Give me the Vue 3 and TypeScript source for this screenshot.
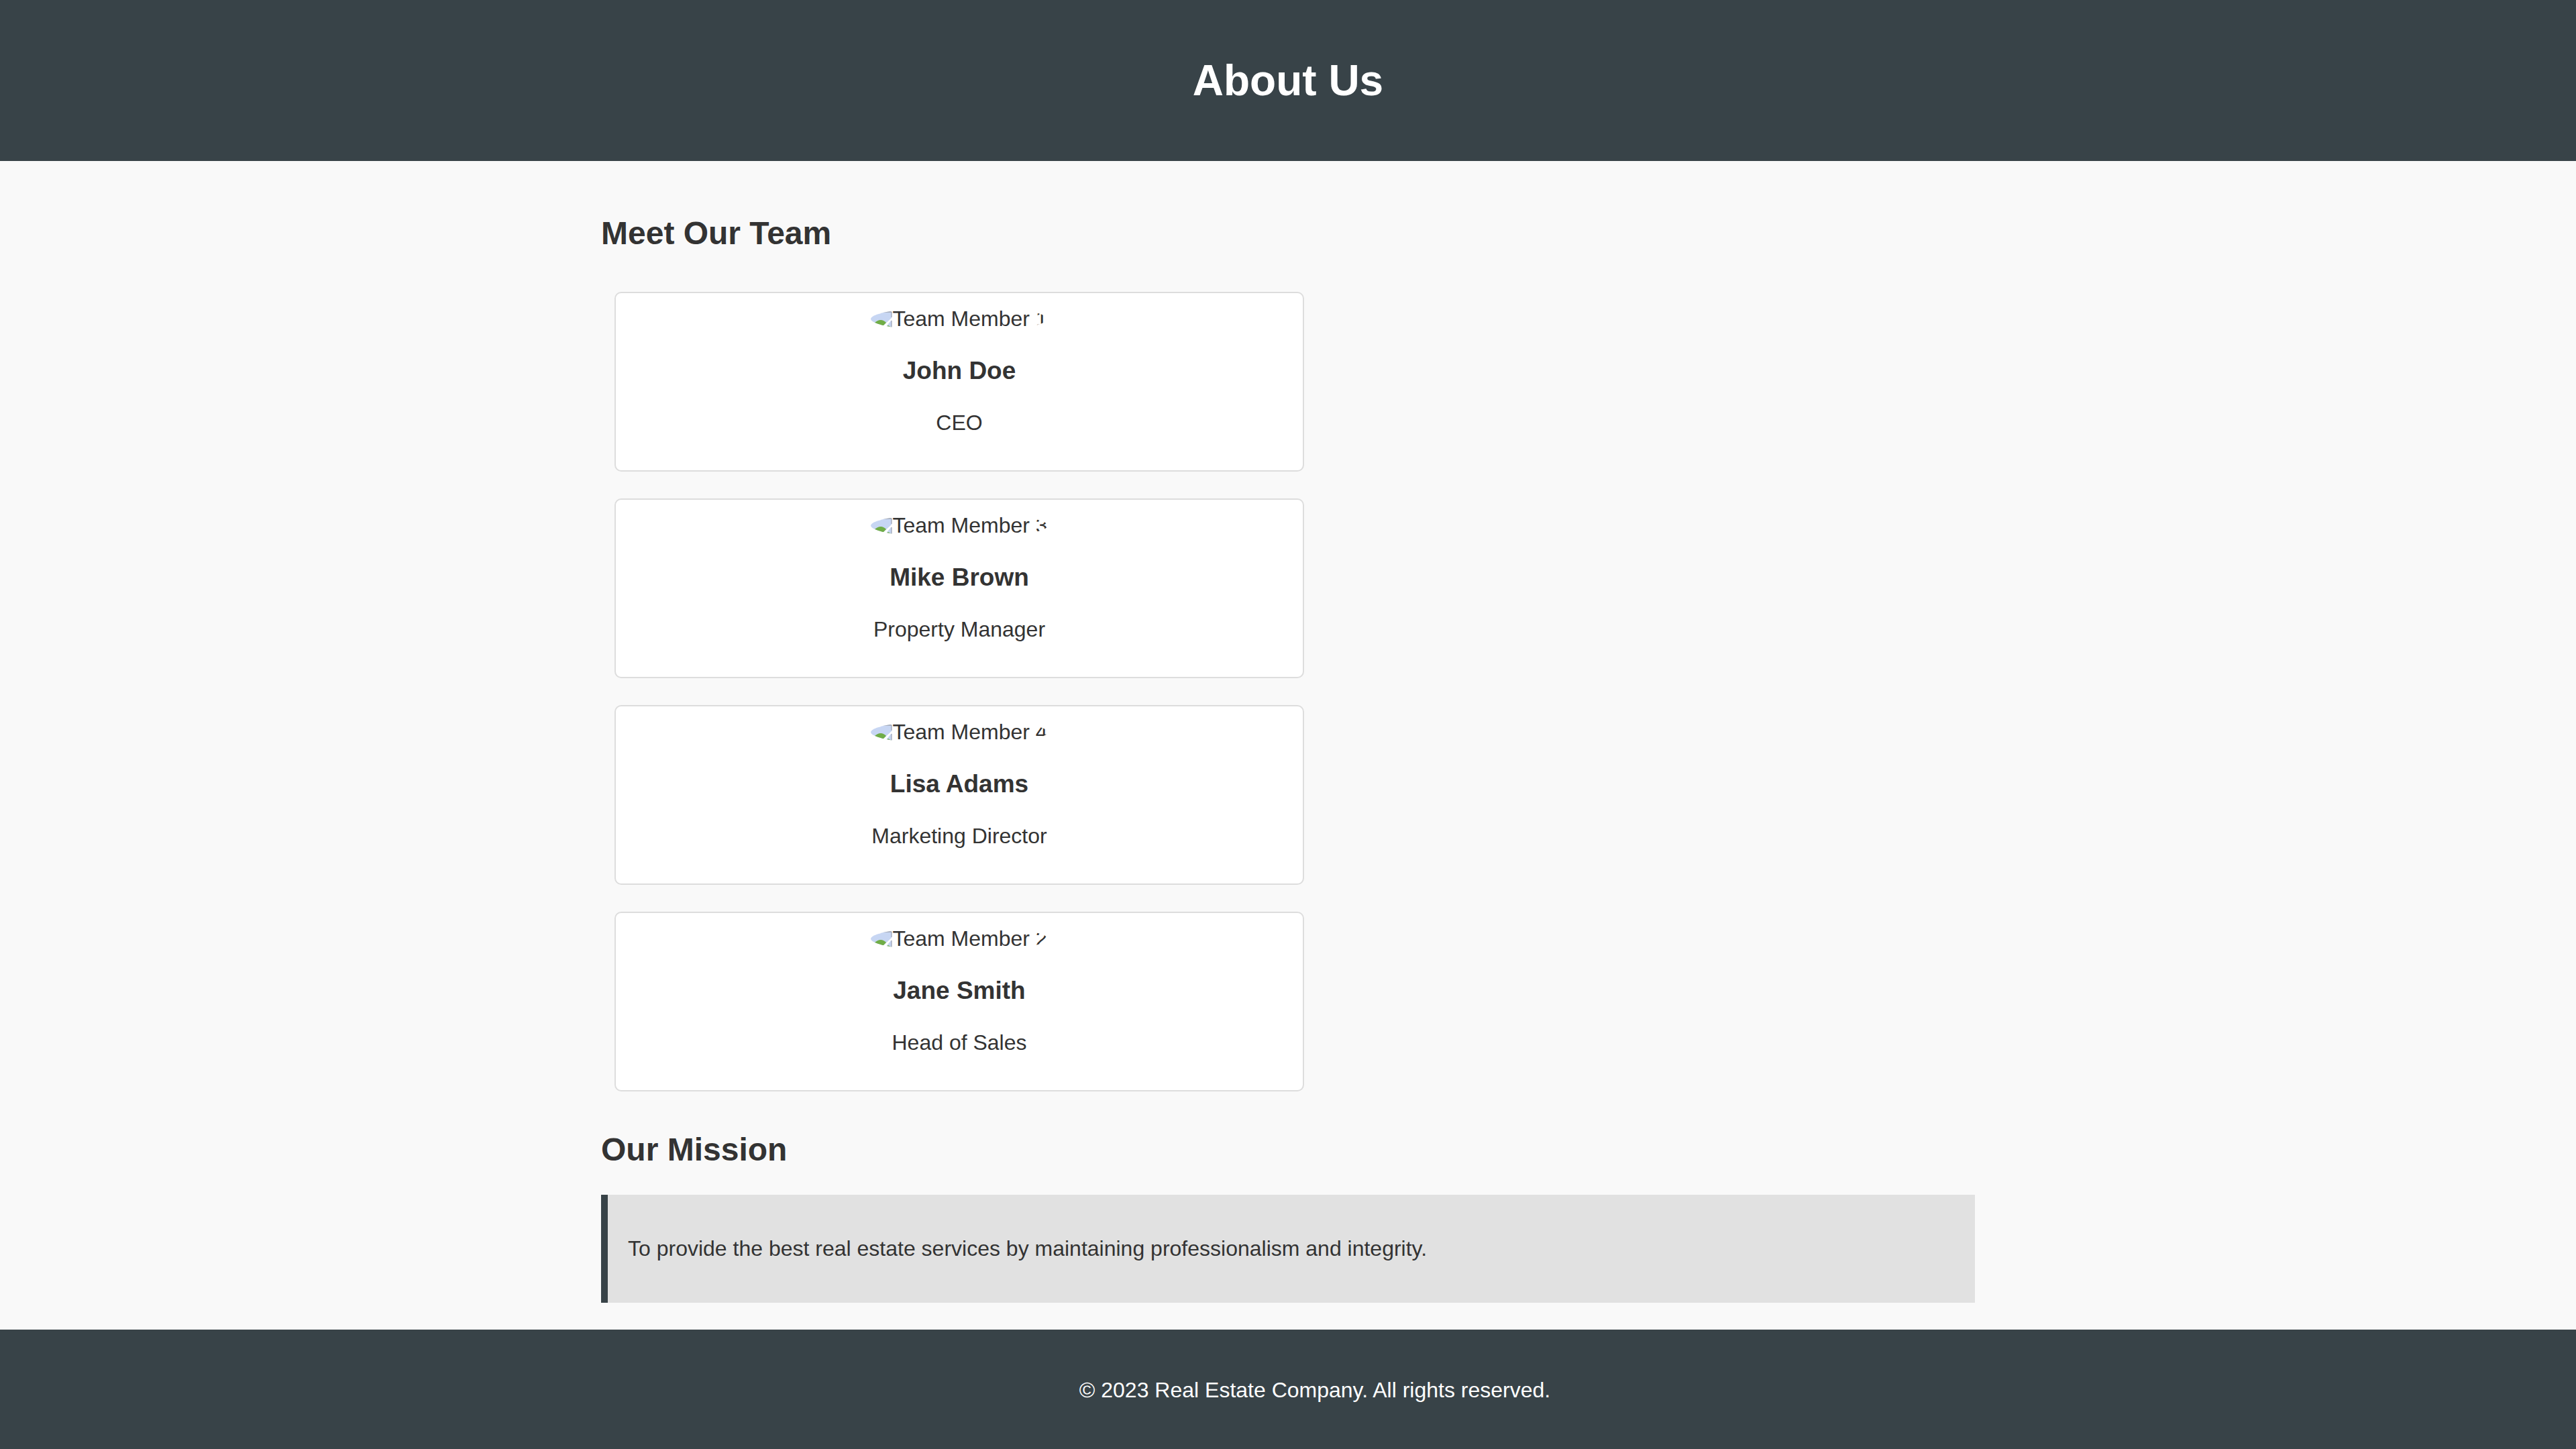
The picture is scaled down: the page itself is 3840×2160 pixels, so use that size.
<script setup lang="ts">
interface Member {
  photoLabel: string
  name: string
  role: string
}

const team: Member[] = [
  { photoLabel: 'Team Member 1', name: 'John Doe', role: 'CEO' },
  { photoLabel: 'Team Member 3', name: 'Mike Brown', role: 'Property Manager' },
  { photoLabel: 'Team Member 4', name: 'Lisa Adams', role: 'Marketing Director' },
  { photoLabel: 'Team Member 2', name: 'Jane Smith', role: 'Head of Sales' },
]
</script>

<template>
  <div class="page">
    <header class="banner">
      <h1>About Us</h1>
    </header>

    <main class="content">
      <section>
        <h2>Meet Our Team</h2>
        <div class="team">
          <article v-for="member in team" :key="member.name" class="card">
            <div class="photo">
              <svg class="placeholder" viewBox="0 0 32 32" aria-hidden="true">
                <path d="M0 2H31V12L16 26H0Z" fill="#c7d6f3" />
                <path d="M0 2H16Q16 5 13 6Q9 6 6 7H0Z" fill="#fff" />
                <path d="M5 20Q10 15 15 15Q19 15 23 19L16 26H5Z" fill="#70ad47" />
                <path d="M31 15V27H21Z" fill="#c7d6f3" />
                <path d="M23 25L26 23L31 26V28H21Z" fill="#70ad47" />
                <path d="M16 3H31" fill="none" stroke="#8c8c8c" />
                <path d="M31 3V11M31 16V28" fill="none" stroke="#8c93a3" />
              </svg>
              <span>{{ member.photoLabel }}</span>
            </div>
            <h3>{{ member.name }}</h3>
            <p>{{ member.role }}</p>
          </article>
        </div>
      </section>

      <section>
        <h2 class="mission-title">Our Mission</h2>
        <div class="mission">
          <p>To provide the best real estate services by maintaining professionalism and integrity.</p>
        </div>
      </section>
    </main>

    <footer class="footer">
      <p>© 2023 Real Estate Company. All rights reserved.</p>
    </footer>
  </div>
</template>

<style>
body {
  margin: 0;
  background: #f9f9f9;
}
</style>

<style scoped>
.page {
  display: flow-root;
  overflow-x: hidden;
  color: #333;
  font-family: Arial, "Liberation Sans", sans-serif;
  font-size: 32px;
  line-height: 37px;
}

p {
  margin: 32px 0;
}

.banner {
  display: flow-root;
  padding: 40px;
  background: #384348;
  color: #fff;
  text-align: center;
}

h1 {
  margin: 43px 0;
  font-size: 64px;
  line-height: 74px;
}

h2 {
  margin: 40px 0;
  font-size: 48px;
  line-height: 55px;
}

h3 {
  margin: 37px 0;
  font-size: 37px;
  line-height: 44px;
}

.content {
  max-width: 2048px;
  margin: 0 auto;
  padding: 40px 0;
}

.content > section {
  display: flow-root;
}

.team {
  display: flex;
  flex-direction: column;
  align-items: flex-start;
  gap: 40px;
  margin: 60px 20px 20px;
}

.card {
  display: flow-root;
  box-sizing: border-box;
  width: calc(50% + 24px);
  padding: 20px;
  border: 2px solid #ddd;
  border-radius: 10px;
  background: #fff;
  text-align: center;
}

.photo {
  display: flex;
  width: fit-content;
  height: 37px;
  margin: 0 auto;
  border-radius: 50%;
  overflow: hidden;
  white-space: nowrap;
}

.placeholder {
  flex: none;
  align-self: flex-end;
  width: 32px;
  height: 32px;
}

.mission-title {
  margin-top: 39px;
}

.mission {
  display: flow-root;
  padding: 30px;
  border-left: 10px solid #384348;
  background: #e1e1e1;
}

/* The bar is padded on top of its full width, so it runs past the right edge. */
.footer {
  display: flow-root;
  width: 100%;
  padding: 40px 40px 37px;
  background: #384348;
  color: #fff;
  text-align: center;
}
</style>
